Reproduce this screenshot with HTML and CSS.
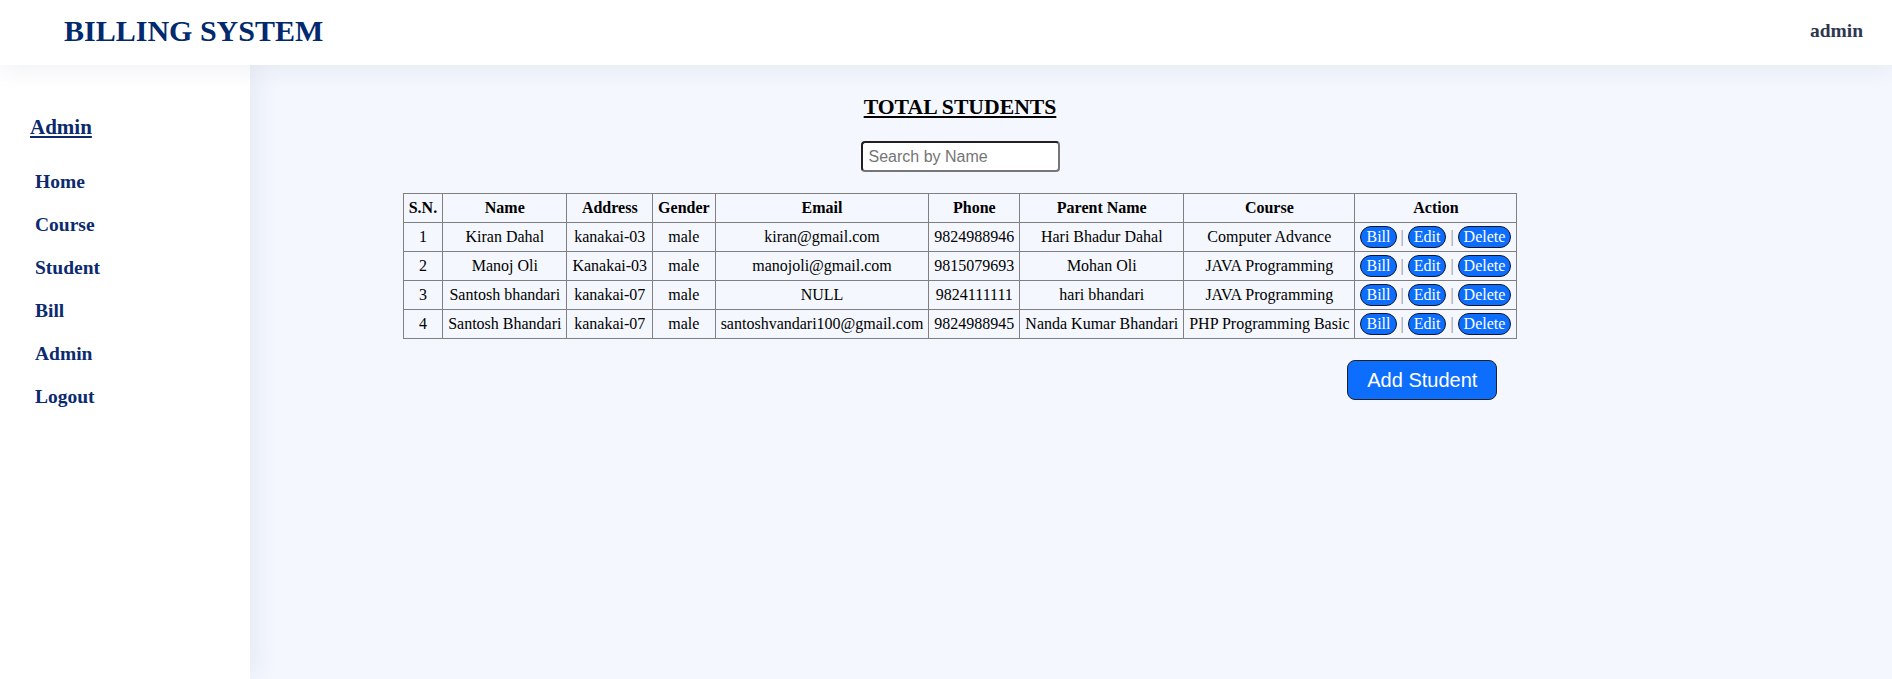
FILE: index.html
```html
<!DOCTYPE html>
<html lang="en">
<head>
<meta charset="utf-8">
<title>Billing System</title>
<link rel="stylesheet" href="styles.css">
</head>
<body>
<header class="topbar">
  <h1 class="brand">BILLING SYSTEM</h1>
  <div class="user">admin</div>
</header>
<div class="layout">
  <aside class="sidebar">
    <h3 class="side-title">Admin</h3>
    <nav class="menu">
      <a href="#">Home</a>
      <a href="#">Course</a>
      <a href="#">Student</a>
      <a href="#">Bill</a>
      <a href="#">Admin</a>
      <a href="#">Logout</a>
    </nav>
  </aside>
  <main class="main">
    <div class="content">
      <h2 class="page-title">TOTAL STUDENTS</h2>
      <input class="search" type="text" placeholder="Search by Name">
      <div class="table-area">
        <table class="students">
          <thead>
            <tr><th>S.N.</th><th>Name</th><th>Address</th><th>Gender</th><th>Email</th><th>Phone</th><th>Parent Name</th><th>Course</th><th>Action</th></tr>
          </thead>
          <tbody>
            <tr><td>1</td><td>Kiran Dahal</td><td>kanakai-03</td><td>male</td><td>kiran@gmail.com</td><td>9824988946</td><td>Hari Bhadur Dahal</td><td>Computer Advance</td><td><button class="btn">Bill</button> <span class="sep">|</span> <button class="btn">Edit</button> <span class="sep">|</span> <button class="btn">Delete</button></td></tr>
            <tr><td>2</td><td>Manoj Oli</td><td>Kanakai-03</td><td>male</td><td>manojoli@gmail.com</td><td>9815079693</td><td>Mohan Oli</td><td>JAVA Programming</td><td><button class="btn">Bill</button> <span class="sep">|</span> <button class="btn">Edit</button> <span class="sep">|</span> <button class="btn">Delete</button></td></tr>
            <tr><td>3</td><td>Santosh bhandari</td><td>kanakai-07</td><td>male</td><td>NULL</td><td>9824111111</td><td>hari bhandari</td><td>JAVA Programming</td><td><button class="btn">Bill</button> <span class="sep">|</span> <button class="btn">Edit</button> <span class="sep">|</span> <button class="btn">Delete</button></td></tr>
            <tr><td>4</td><td>Santosh Bhandari</td><td>kanakai-07</td><td>male</td><td>santoshvandari100@gmail.com</td><td>9824988945</td><td>Nanda Kumar Bhandari</td><td>PHP Programming Basic</td><td><button class="btn">Bill</button> <span class="sep">|</span> <button class="btn">Edit</button> <span class="sep">|</span> <button class="btn">Delete</button></td></tr>
          </tbody>
        </table>
        <div class="actions"><button class="add-btn">Add Student</button></div>
      </div>
    </div>
  </main>
</div>
</body>
</html>
```
FILE: styles.css
```css
html, body {
  margin: 0;
  height: 100%;
}
body {
  font-family: "Liberation Serif", "Times New Roman", serif;
  background: #f4f7fe;
  overflow: hidden;
}
.topbar {
  position: relative;
  z-index: 2;
  height: 65px;
  box-sizing: border-box;
  background: #ffffff;
  display: flex;
  justify-content: space-between;
  align-items: flex-start;
  padding: 0 29px 0 64px;
  box-shadow: 0 4px 26px rgba(20, 40, 90, 0.07);
}
.brand {
  margin: 13.6px 0 0;
  font-size: 30px;
  line-height: 34px;
  font-weight: bold;
  color: #00296e;
}
.user {
  margin-top: 19.7px;
  font-size: 19.5px;
  line-height: 22px;
  font-weight: bold;
  color: #2e3650;
}
.layout {
  display: flex;
  height: 614px;
}
.sidebar {
  position: relative;
  z-index: 1;
  width: 250px;
  flex: none;
  box-sizing: border-box;
  background: #ffffff;
  padding: 50px 0 0 30px;
  box-shadow: 4px 0 26px rgba(20, 50, 120, 0.08);
}
.side-title {
  margin: 0;
  font-size: 21px;
  line-height: 24px;
  font-weight: bold;
  text-decoration: underline;
  color: #0a2a6b;
}
.menu {
  display: flex;
  flex-direction: column;
  margin-top: 21.3px;
  padding-left: 5px;
}
.menu a {
  font-size: 19.5px;
  line-height: 43px;
  font-weight: bold;
  color: #0b2b6e;
  text-decoration: none;
}
.main {
  flex: 1;
  display: flex;
  justify-content: center;
  padding: 30px 222px 0 0;
}
.content {
  display: flex;
  flex-direction: column;
  align-items: center;
  gap: 21px;
}
.page-title {
  margin: 0;
  font-size: 21.7px;
  line-height: 25px;
  font-weight: bold;
  text-decoration: underline;
  color: #000000;
}
.search {
  width: 199px;
  height: 31px;
  box-sizing: border-box;
  border: 2px inset #767676;
  border-radius: 4px;
  padding: 0 6px;
  font: 16px "Liberation Sans", Arial, sans-serif;
  background: #ffffff;
  color: #000;
}
.search::placeholder {
  color: #757575;
}
.table-area {
  display: flex;
  flex-direction: column;
  gap: 21px;
}
.students {
  border-collapse: collapse;
  border: 1px solid #808080;
}
.students th,
.students td {
  border: 1px solid #808080;
  padding: 0 5px;
  height: 28px;
  text-align: center;
  vertical-align: middle;
  font-size: 16px;
  white-space: nowrap;
  color: #000;
}
.students th {
  font-weight: bold;
}
.btn {
  font: 16px "Liberation Serif", "Times New Roman", serif;
  line-height: normal;
  color: #ffffff;
  background: #0d6efd;
  border: 1px solid #0e1430;
  border-radius: 11px;
  padding: 1px 5px;
  margin: 0;
  cursor: pointer;
}
.sep {
  color: #888888;
}
.actions {
  display: flex;
  justify-content: flex-end;
  padding-right: 20px;
}
.add-btn {
  font: 20px "Liberation Sans", Arial, sans-serif;
  line-height: normal;
  color: #ffffff;
  background: #0d6efd;
  border: 1px solid #222222;
  border-radius: 8px;
  padding: 7.5px 19px;
  margin: 0;
  cursor: pointer;
}
```
